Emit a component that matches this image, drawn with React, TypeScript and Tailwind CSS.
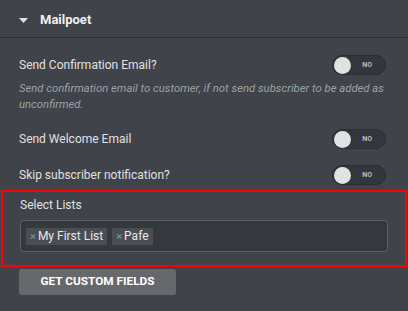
import React from "react";

function Toggle() {
  return (
    <div className="relative w-[54px] h-[20px] rounded-full bg-[#33363b] border border-[#2c2e32] flex items-center justify-end pr-[13px]">
      <div className="absolute left-[1px] top-[1px] w-[17px] h-[17px] rounded-full bg-[#e1e2e4]" />
      <span className="text-[7px] font-bold text-[#b9bcc1] leading-none">NO</span>
    </div>
  );
}

function Tag({ label }: { label: string }) {
  return (
    <div className="flex items-center h-[17px] bg-[#4a4d53] px-[4px] gap-[2px]">
      <span className="text-[11px] text-[#8e9297] leading-none">×</span>
      <span className="text-[12px] text-[#e6e8ea] leading-none">{label}</span>
    </div>
  );
}

export default function App() {
  return (
    <div
      className="w-[408px] h-[311px] bg-[#404349] overflow-hidden text-[#e0e1e3]"
      style={{ fontFamily: "Roboto, 'Liberation Sans', sans-serif" }}
    >
      {/* Header */}
      <div className="h-[38px] flex items-center pl-[19px] pt-[3px] border-b border-[#2f3136]">
        <svg width="9" height="6" viewBox="0 0 9 6" className="mt-[1px]">
          <polygon points="0,0 9,0 4.5,5" fill="#e0e1e3" />
        </svg>
        <span className="ml-[12px] text-[13px] font-bold text-[#eef0f2]">Mailpoet</span>
      </div>

      {/* Confirmation */}
      <div className="px-[19px] pt-[17px]">
        <div className="flex items-center justify-between pr-[3px]">
          <span className="text-[12px]">Send Confirmation Email?</span>
          <Toggle />
        </div>
        <p className="mt-[6px] text-[11.3px] italic leading-[16px] text-[#9da1a7]">
          Send confirmation email to customer, if not send subscriber to be added as unconfirmed.
        </p>
      </div>

      <div className="px-[19px] pt-[16px]">
        <div className="flex items-center justify-between pr-[3px]">
          <span className="text-[12px]">Send Welcome Email</span>
          <Toggle />
        </div>
        <div className="flex items-center justify-between pr-[3px] mt-[16px]">
          <span className="text-[12px]">Skip subscriber notification?</span>
          <Toggle />
        </div>
      </div>

      {/* Select lists */}
      <div className="mt-[5px] mx-[1px] w-[406px] h-[77px] border-[2px] border-[#ff0000] px-[17px] pt-[4px]">
        <div className="text-[12px]">Select Lists</div>
        <div className="mt-[6px] w-[368px] h-[32px] rounded-[3px] bg-[#35383d] border border-[#5d6066] flex items-center gap-[5px] px-[5px]">
          <Tag label="My First List" />
          <Tag label="Pafe" />
        </div>
      </div>

      <div className="px-[19px] mt-[1px]">
        <button className="w-[157px] h-[26px] rounded-[3px] bg-[#67686c] text-[11.8px] font-bold text-white">
          GET CUSTOM FIELDS
        </button>
      </div>
    </div>
  );
}
